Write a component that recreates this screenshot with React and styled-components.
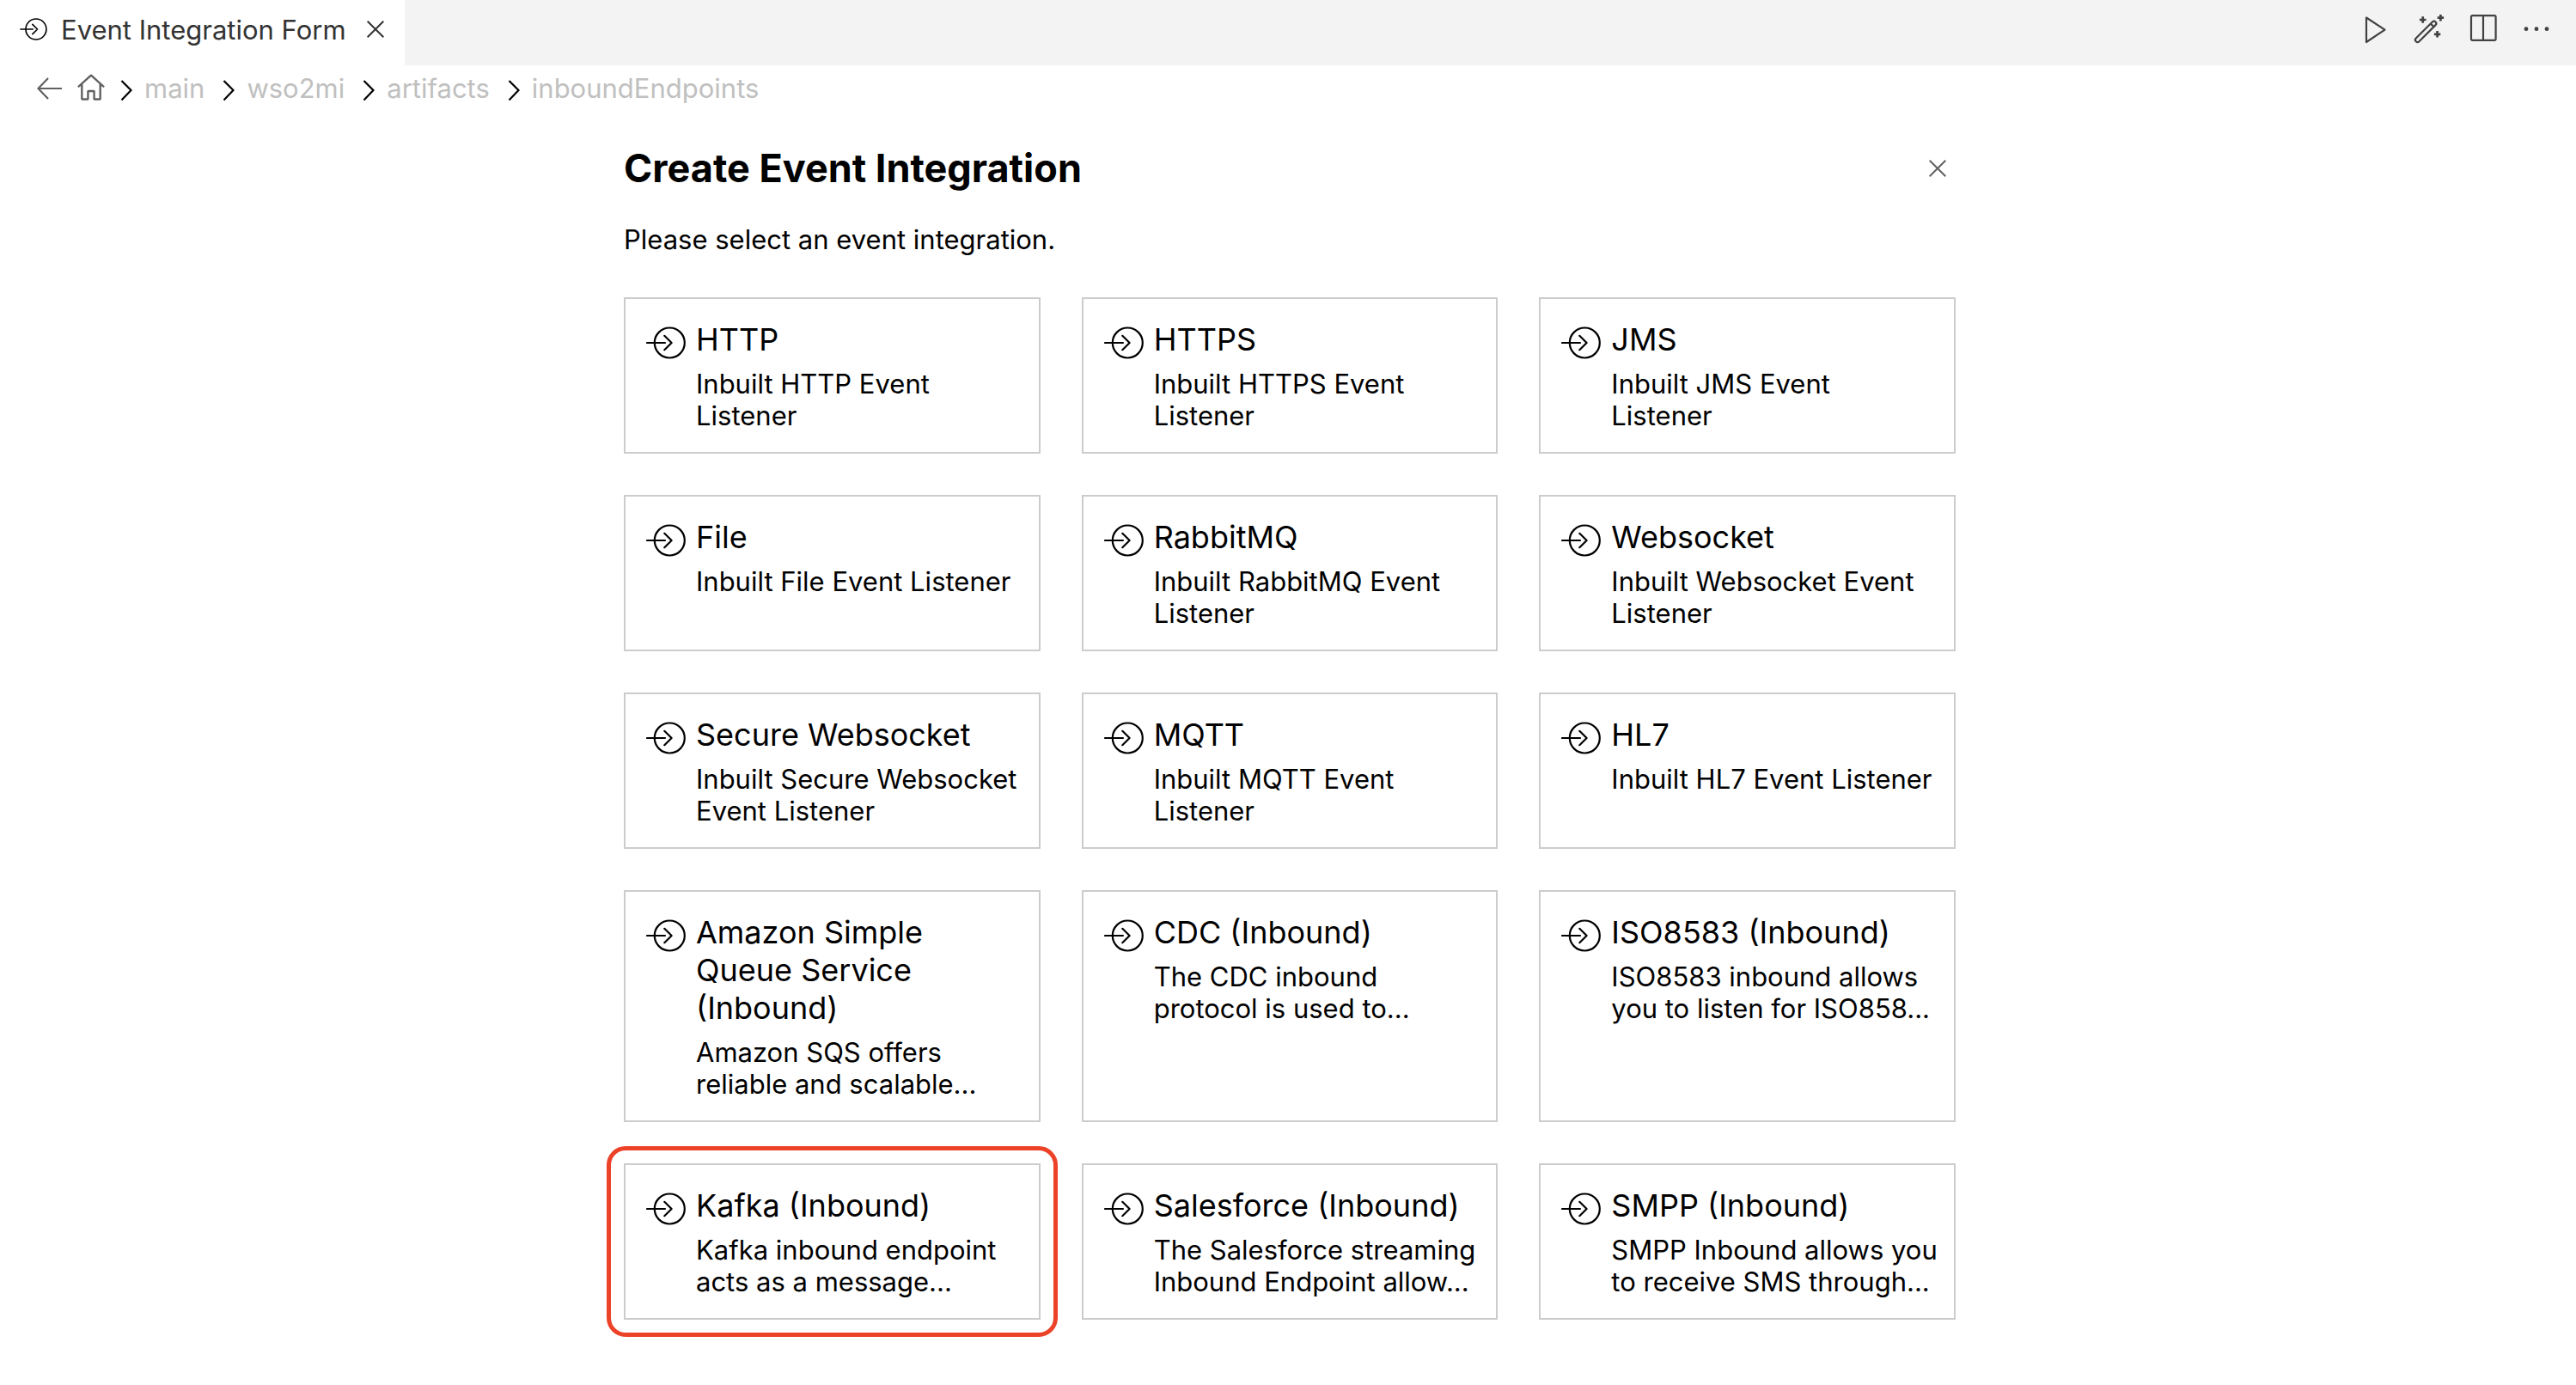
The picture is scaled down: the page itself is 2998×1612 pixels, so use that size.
import React from "react";
import styled, { createGlobalStyle } from "styled-components";

const GlobalStyle = createGlobalStyle`
  *, *::before, *::after { box-sizing: border-box; }
  body {
    margin: 0;
    background: #ffffff;
    color: #000000;
    font-family: Inter, "Liberation Sans", sans-serif;
    font-size: 31px;
  }
  button {
    margin: 0;
    padding: 0;
    border: 0;
    background: none;
    color: inherit;
    font: inherit;
    text-align: left;
    cursor: pointer;
  }
  svg { display: block; flex: none; }
`;

const TabBar = styled.header`
  display: flex;
  align-items: stretch;
  justify-content: space-between;
  height: 76px;
  background: #f3f3f3;
`;

const Tab = styled.div`
  display: flex;
  align-items: center;
  padding: 0 24px 8px 23px;
  background: #ffffff;
  color: #333333;
`;

const TabTitle = styled.span`
  margin: 0 24px 0 16px;
  white-space: nowrap;
`;

const Toolbar = styled.div`
  display: flex;
  align-items: center;
  gap: 25px;
  padding: 0 27px 8px 0;
  color: #424242;
`;

const Breadcrumbs = styled.nav`
  display: flex;
  align-items: center;
  padding: 8px 43px 0;
  line-height: 38px;
  color: #616161;
`;

const NavButton = styled.button`
  margin-right: 18px;
`;

const Crumbs = styled.ol`
  display: flex;
  align-items: center;
  gap: 21px;
  margin: 0;
  padding: 0;
  list-style: none;
`;

const Crumb = styled.li`
  display: flex;
  align-items: center;
  gap: 14px;
  color: #000000;

  a {
    color: #c0c0c0;
    text-decoration: none;
  }
`;

const Page = styled.main`
  max-width: 1634px;
  margin: 0 auto;
  padding: 46px 40px 56px 44px;
`;

const TitleRow = styled.div`
  display: flex;
  align-items: center;
  justify-content: space-between;
  padding-right: 11px;
  color: #616161;
`;

const Title = styled.h1`
  margin: 0;
  color: #000000;
  font-size: 45px;
  font-weight: 700;
  line-height: 56px;
`;

const Intro = styled.p`
  margin: 36px 0 48px;
  line-height: 38px;
`;

const Grid = styled.div`
  display: grid;
  grid-template-columns: repeat(3, minmax(0, 1fr));
  gap: 48px;
`;

const Card = styled.button`
  position: relative;
  display: flex;
  align-items: flex-start;
  gap: 12px;
  padding: 25px 16px 24px 24px;
  border: 2px solid #cccccc;

  & > svg { margin-top: 7px; }

  &::after {
    content: ${(p) => (p.$highlighted ? '""' : "none")};
    position: absolute;
    inset: -22px;
    border: 5px solid #ec4228;
    border-radius: 22px;
    pointer-events: none;
  }
`;

const CardText = styled.span`
  display: flex;
  flex-direction: column;
  gap: 11px;
  min-width: 0;
`;

const CardTitle = styled.span`
  font-size: 36px;
  line-height: 44px;
`;

const CardDescription = styled.span`
  line-height: 37px;
  white-space: pre-line;
`;

const EventIcon = ({ width = 46, height = 38, stroke = 2.2 }) => (
  <svg width={width} height={height} viewBox="0 0 46 38" fill="none" stroke="#000000" strokeWidth={stroke} strokeLinecap="round" strokeLinejoin="round" aria-hidden="true">
    <circle cx="27.3" cy="19" r="17.5" />
    <path d="M1 19H22M21.3 10.8L29.6 19L21.3 27.2" />
  </svg>
);

const CloseIcon = () => (
  <svg width="20" height="20" viewBox="0 0 20 20" fill="none" stroke="currentColor" strokeWidth="2" aria-hidden="true">
    <path d="M0.7 0.7L19.3 19.3M19.3 0.7L0.7 19.3" />
  </svg>
);

const ToolIcon = ({ children }) => (
  <svg width="38" height="38" viewBox="0 0 38 38" fill="none" stroke="currentColor" strokeWidth="2.2" strokeLinejoin="round" aria-hidden="true">
    {children}
  </svg>
);

const Chevron = () => (
  <svg width="14" height="38" viewBox="0 0 14 38" fill="none" stroke="currentColor" strokeWidth="2.2" aria-hidden="true">
    <path d="M1.5 10L12.5 21L1.5 32.5" />
  </svg>
);

const crumbs = ["main", "wso2mi", "artifacts", "inboundEndpoints"];

const integrations = [
  { name: "HTTP", description: "Inbuilt HTTP Event\nListener" },
  { name: "HTTPS", description: "Inbuilt HTTPS Event\nListener" },
  { name: "JMS", description: "Inbuilt JMS Event\nListener" },
  { name: "File", description: "Inbuilt File Event Listener" },
  { name: "RabbitMQ", description: "Inbuilt RabbitMQ Event Listener" },
  { name: "Websocket", description: "Inbuilt Websocket Event Listener" },
  { name: "Secure Websocket", description: "Inbuilt Secure Websocket Event Listener" },
  { name: "MQTT", description: "Inbuilt MQTT Event\nListener" },
  { name: "HL7", description: "Inbuilt HL7 Event Listener" },
  { name: "Amazon Simple Queue Service (Inbound)", description: "Amazon SQS offers reliable and scalable..." },
  { name: "CDC (Inbound)", description: "The CDC inbound protocol is used to..." },
  { name: "ISO8583 (Inbound)", description: "ISO8583 inbound allows you to listen for ISO858..." },
  { name: "Kafka (Inbound)", description: "Kafka inbound endpoint acts as a message...", highlighted: true },
  { name: "Salesforce (Inbound)", description: "The Salesforce streaming Inbound Endpoint allow..." },
  { name: "SMPP (Inbound)", description: "SMPP Inbound allows you to receive SMS through..." },
];

export default function App() {
  return (
    <>
      <GlobalStyle />
      <TabBar>
        <Tab>
          <EventIcon width={32} height={26} stroke={2.4} />
          <TabTitle>Event Integration Form</TabTitle>
          <button type="button" aria-label="Close tab"><CloseIcon /></button>
        </Tab>
        <Toolbar>
          <button type="button" aria-label="Run">
            <ToolIcon><path d="M10 5.5L31.5 19.7L10 34Z" /></ToolIcon>
          </button>
          <button type="button" aria-label="Generate">
            <ToolIcon>
              <rect x="-2.6" y="-2.6" width="32.2" height="5.2" rx="2.6" transform="translate(6.6 31.4) rotate(-45)" />
              <path d="M21.8 12.6L25.6 16.2" />
              <path d="M12.7 4.2V11.8M8.9 8H16.5M33.4 2V9.4M29.7 5.7H37.1M29.6 21.1V28.5M25.9 24.8H33.3" strokeWidth="2.7" />
            </ToolIcon>
          </button>
          <button type="button" aria-label="Split editor">
            <ToolIcon><rect x="6" y="3.2" width="28.6" height="28.6" rx="1.6" /><path d="M20 3V32" /></ToolIcon>
          </button>
          <button type="button" aria-label="More actions">
            <ToolIcon>
              <g fill="currentColor" stroke="none">
                <circle cx="7" cy="18.7" r="2.4" /><circle cx="19" cy="18.7" r="2.4" /><circle cx="31" cy="18.7" r="2.4" />
              </g>
            </ToolIcon>
          </button>
        </Toolbar>
      </TabBar>

      <Breadcrumbs aria-label="Breadcrumb">
        <NavButton type="button" aria-label="Back">
          <svg width="29" height="26" viewBox="0 0 29 26" fill="none" stroke="currentColor" strokeWidth="2.2" aria-hidden="true">
            <path d="M29 13H1.5M13 1L1.5 13L13 25" />
          </svg>
        </NavButton>
        <NavButton type="button" aria-label="Home">
          <svg width="32" height="34" viewBox="1.29 1.1 13.43 14.3" fill="currentColor" aria-hidden="true">
            <path fillRule="evenodd" d="M8.36 1.37l6.36 5.8-.71.71L13 6.964v6.526l-.5.5h-3l-.5-.5v-3.5H7v3.5l-.5.5h-3l-.5-.5V6.972L2 7.88l-.71-.71 6.35-5.8h.72zM4 6.063v6.927h2v-3.5l.5-.5h3l.5.5v3.5h2V6.057L8 2.43 4 6.063z" />
          </svg>
        </NavButton>
        <Crumbs>
          {crumbs.map((name) => (
            <Crumb key={name}>
              <Chevron />
              <a href={`#${name}`}>{name}</a>
            </Crumb>
          ))}
        </Crumbs>
      </Breadcrumbs>

      <Page>
        <TitleRow>
          <Title>Create Event Integration</Title>
          <button type="button" aria-label="Close"><CloseIcon /></button>
        </TitleRow>
        <Intro>Please select an event integration.</Intro>
        <Grid>
          {integrations.map((item) => (
            <Card key={item.name} type="button" $highlighted={item.highlighted}>
              <EventIcon />
              <CardText>
                <CardTitle>{item.name}</CardTitle>
                <CardDescription>{item.description}</CardDescription>
              </CardText>
            </Card>
          ))}
        </Grid>
      </Page>
    </>
  );
}
